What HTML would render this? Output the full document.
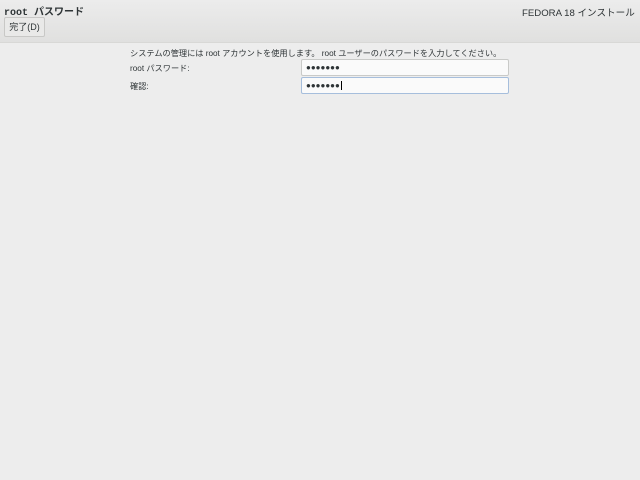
<!DOCTYPE html>
<html><head><meta charset="utf-8"><style>
body{margin:0;width:640px;height:480px;background:#ededed;font-family:"Liberation Sans","Noto Sans CJK JP",sans-serif;position:relative;overflow:hidden;color:#2e3436}
.hdr{position:absolute;left:0;top:0;width:640px;height:42px;background:linear-gradient(#ececec,#e0e0df);border-bottom:1px solid #d8d8d6}
.t{position:absolute;font-size:10px;white-space:nowrap}
.btn{position:absolute;left:4px;top:17px;width:39px;height:18px;border:1px solid #c8c8c6;border-radius:2px;background:#e9e9e8;font-size:9px;line-height:18px;text-align:center}
.in{position:absolute;left:301px;width:208px;background:#fafafa;border:1px solid #c9cac8;border-radius:2px;font-size:8px;line-height:16px;padding-left:4px;box-sizing:border-box}
</style></head><body>
<div class="hdr"></div>
<div class="t" style="left:4px;top:3px;font-weight:bold;font-family:'Liberation Mono','Noto Sans CJK JP',monospace;font-size:10px">root パスワード</div>
<div class="btn">完了(D)</div>
<div class="t" style="left:522px;top:5px;font-size:9.6px">FEDORA 18 インストール</div>
<div class="t" style="left:130px;top:47px;font-size:8.2px">システムの管理には root アカウントを使用します。 root ユーザーのパスワードを入力してください。</div>
<div class="t" style="left:130px;top:62px;font-size:8.2px">root パスワード:</div>
<div class="t" style="left:130px;top:80px;font-size:8.2px">確認:</div>
<div class="in" style="top:59px;height:17px">●●●●●●●</div>
<div class="in" style="top:77px;height:17px;border-color:#a6bedc">●●●●●●●<span style="border-left:1px solid #000;margin-left:1px"></span></div>
</body></html>
